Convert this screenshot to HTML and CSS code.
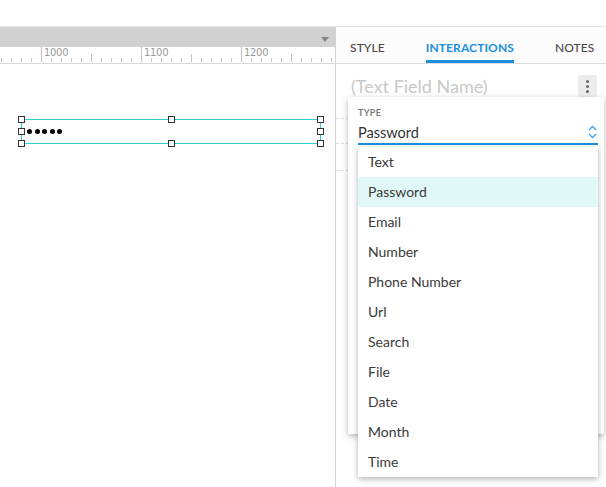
FILE: index.html
```html
<!DOCTYPE html>
<html>
<head>
<meta charset="utf-8">
<link rel="stylesheet" href="styles.css">
</head>
<body>
<div class="app">
  <div class="topbar"></div>
  <div class="main">
    <div class="canvas">
      <div class="toolbar"><span class="tb-arrow"></span></div>
      <div class="ruler">
        <svg class="ruler-svg" width="335" height="16" viewBox="0 0 335 16">
          <g stroke="#c4c4c4" stroke-width="1">
            <path d="M1.5 11V15M11.5 11V15M21.5 11V15M31.5 11V15M41.5 0V15M51.5 11V15M61.5 11V15M71.5 11V15M81.5 11V15M91.5 7V15M101.5 11V15M111.5 11V15M121.5 11V15M131.5 11V15M141.5 0V15M151.5 11V15M161.5 11V15M171.5 11V15M181.5 11V15M191.5 7V15M201.5 11V15M211.5 11V15M221.5 11V15M231.5 11V15M241.5 0V15M251.5 11V15M261.5 11V15M271.5 11V15M281.5 11V15M291.5 7V15M301.5 11V15M311.5 11V15M321.5 11V15M331.5 11V15"/>
          </g>
        </svg>
        <span class="rl rl1">1000</span>
        <span class="rl rl2">1100</span>
        <span class="rl rl3">1200</span>
      </div>
      <div class="stage">
        <div class="sel">
          <div class="dots"><i></i><i></i><i></i><i></i><i></i></div>
          <span class="h h-tl"></span><span class="h h-tm"></span><span class="h h-tr"></span>
          <span class="h h-ml"></span><span class="h h-mr"></span>
          <span class="h h-bl"></span><span class="h h-bm"></span><span class="h h-br"></span>
        </div>
      </div>
    </div>
    <div class="panel">
      <div class="tabs">
        <div class="tab">STYLE</div>
        <div class="tab active">INTERACTIONS</div>
        <div class="tab">NOTES</div>
      </div>
      <div class="panel-body">
        <div class="name-row">
          <span class="name-ph">(Text Field Name)</span>
          <span class="more"><i></i><i></i><i></i></span>
        </div>
        <div class="row-dash r1"></div>
        <div class="row-dash r2"></div>
        <div class="row-dash r3"></div>

        <div class="card">
          <div class="type-label">TYPE</div>
          <div class="select">
            <span>Password</span>
            <svg class="chev" width="9" height="14" viewBox="0 0 9 14"><path d="M1 5L4.5 1.5L8 5M1 9L4.5 12.5L8 9" fill="none" stroke="#3aa5ee" stroke-width="1.3"/></svg>
          </div>
          <ul class="list">
            <li>Text</li>
            <li class="hl">Password</li>
            <li>Email</li>
            <li>Number</li>
            <li>Phone Number</li>
            <li>Url</li>
            <li>Search</li>
            <li>File</li>
            <li>Date</li>
            <li>Month</li>
            <li>Time</li>
          </ul>
        </div>
      </div>
    </div>
  </div>
</div>
</body>
</html>
```
FILE: styles.css
```css
* { box-sizing: border-box; }
html, body { margin: 0; padding: 0; background: #fff; }
body { width: 606px; height: 487px; overflow: hidden; font-family: Lato, "Open Sans", sans-serif; color: #333; }
.app { display: flex; flex-direction: column; height: 487px; }
.topbar { height: 27px; border-bottom: 1px solid #e2e2e2; }
.main { flex: 1; display: flex; min-height: 0; }
.canvas { width: 336px; border-right: 1px solid #d4d4d4; display: flex; flex-direction: column; }
.toolbar { height: 20px; background: #d1d1d1; position: relative; }
.tb-arrow { position: absolute; left: 321px; top: 10px; width: 0; height: 0; border-left: 4.5px solid transparent; border-right: 4.5px solid transparent; border-top: 5px solid #858585; }
.ruler { height: 17px; position: relative; border-bottom: 1px solid #d6d6d6; }
.ruler-svg { display: block; }
.rl { position: absolute; top: 0; font-family: "DejaVu Sans", sans-serif; font-size: 10px; color: #9a9a9a; letter-spacing: -0.3px; }
.rl1 { left: 44px; } .rl2 { left: 144px; } .rl3 { left: 244px; }
.stage { flex: 1; position: relative; }
.sel { position: absolute; left: 21px; top: 55px; width: 300px; height: 25px; border: 1px solid #2fcfcf; }
.dots { display: flex; gap: 2.6px; margin: 9px 0 0 5px; }
.dots i { display: block; width: 5px; height: 5px; border-radius: 50%; background: #000; }
.h { position: absolute; width: 7px; height: 7px; background: #fff; border: 1px solid #333; }
.h-tl { left: -4px; top: -4px; } .h-tm { left: 146px; top: -4px; } .h-tr { right: -4px; top: -4px; }
.h-ml { left: -4px; top: 8px; } .h-mr { right: -4px; top: 8px; }
.h-bl { left: -4px; bottom: -4px; } .h-bm { left: 146px; bottom: -4px; } .h-br { right: -4px; bottom: -4px; }

.panel { flex: 1; display: flex; flex-direction: column; }
.tabs { height: 37px; display: flex; border-bottom: 1px solid #dcdcdc; background: #fcfcfc; padding-left: 14px; }
.tab { font-size: 12px; font-weight: 500; color: #4a4a4a; height: 36px; padding-top: 14px; line-height: 14px; letter-spacing: 0.1px; }
.tab:nth-child(1) { margin-right: 41px; }
.tab:nth-child(2) { margin-right: 41px; }
.tab.active { color: #1b8fdf; font-weight: 700; border-bottom: 3px solid #1b8fdf; }
.panel-body { flex: 1; position: relative; }
.name-row { display: flex; align-items: center; justify-content: space-between; height: 34px; padding: 10px 9px 0 15px; }
.name-ph { font-size: 18px; color: #c9c9c9; }
.more { width: 19px; height: 22px; background: #ececec; border-radius: 2px; display: flex; flex-direction: column; align-items: center; justify-content: center; gap: 2px; }
.more i { display: block; width: 3px; height: 3px; border-radius: 50%; background: #666; }
.row-dash { position: absolute; left: 0; width: 260px; border-top: 1px dashed #dedede; }
.r1 { top: 54px; } .r2 { top: 79px; } .r3 { top: 106px; }

.card { position: absolute; left: 12px; top: 33px; width: 256px; height: 337px; background: #fff; box-shadow: 0 2px 6px rgba(0,0,0,0.28); padding: 10px 6px 0 10px; }
.type-label { font-size: 9px; font-weight: 700; color: #7a7a7a; letter-spacing: 0.3px; line-height: 12px; }
.select { height: 26px; border-bottom: 2px solid #1b8fdf; display: flex; align-items: center; justify-content: space-between; padding-top: 2px; }
.select span { font-size: 14.5px; color: #333; }
.chev { margin-right: 1px; }
.list { position: absolute; left: 10px; top: 50px; width: 240px; margin: 0; padding: 0; list-style: none; background: #fff; box-shadow: 0 2px 6px rgba(0,0,0,0.3); }
.list li { height: 30px; line-height: 30px; padding-left: 10px; font-size: 14px; color: #3a3a3a; }
.list li.hl { background: #e0f8f8; }
```
